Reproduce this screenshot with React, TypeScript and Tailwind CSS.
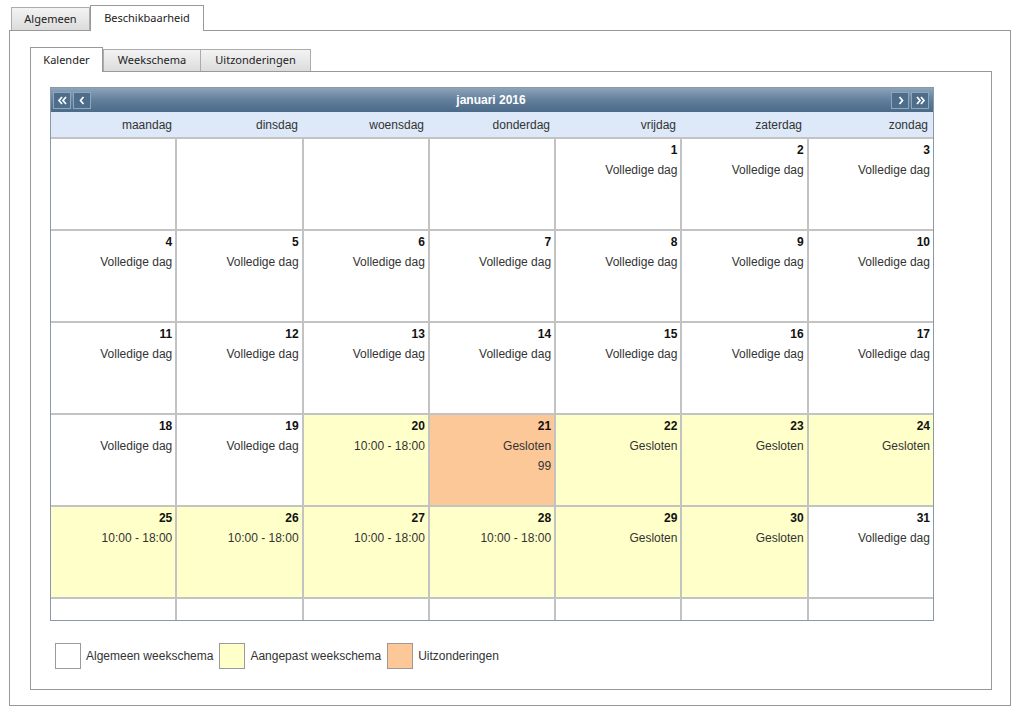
import React from 'react';

type Kind = 'none' | 'white' | 'yellow' | 'orange';

interface DayCell {
    day?: number;
    lines?: string[];
    kind: Kind;
}

const dayNames = ['maandag', 'dinsdag', 'woensdag', 'donderdag', 'vrijdag', 'zaterdag', 'zondag'];

const full = ['Volledige dag'];
const open = ['10:00 - 18:00'];
const closed = ['Gesloten'];

// januari 2016 starts on a friday
const weeks: DayCell[][] = [
    [
        { kind: 'none' }, { kind: 'none' }, { kind: 'none' }, { kind: 'none' },
        { day: 1, lines: full, kind: 'white' },
        { day: 2, lines: full, kind: 'white' },
        { day: 3, lines: full, kind: 'white' },
    ],
    [4, 5, 6, 7, 8, 9, 10].map(d => ({ day: d, lines: full, kind: 'white' as Kind })),
    [11, 12, 13, 14, 15, 16, 17].map(d => ({ day: d, lines: full, kind: 'white' as Kind })),
    [
        { day: 18, lines: full, kind: 'white' },
        { day: 19, lines: full, kind: 'white' },
        { day: 20, lines: open, kind: 'yellow' },
        { day: 21, lines: ['Gesloten', '99'], kind: 'orange' },
        { day: 22, lines: closed, kind: 'yellow' },
        { day: 23, lines: closed, kind: 'yellow' },
        { day: 24, lines: closed, kind: 'yellow' },
    ],
    [
        { day: 25, lines: open, kind: 'yellow' },
        { day: 26, lines: open, kind: 'yellow' },
        { day: 27, lines: open, kind: 'yellow' },
        { day: 28, lines: open, kind: 'yellow' },
        { day: 29, lines: closed, kind: 'yellow' },
        { day: 30, lines: closed, kind: 'yellow' },
        { day: 31, lines: full, kind: 'white' },
    ],
];

const bgFor = (kind: Kind) =>
    kind === 'yellow' ? 'bg-[#ffffc9]' : kind === 'orange' ? 'bg-[#fdc898]' : 'bg-white';

function NavButton({ children }: { children: React.ReactNode }) {
    return (
        <div className="w-[18px] h-[17px] border border-[#8fa7bd] bg-[#4d6d8b] flex items-center justify-center">
            {children}
        </div>
    );
}

function Chevron({ dir, double }: { dir: 'l' | 'r'; double?: boolean }) {
    const single = dir === 'l' ? 'M7.5 3 L4.5 6.5 L7.5 10' : 'M5.5 3 L8.5 6.5 L5.5 10';
    const dbl = dir === 'l'
        ? 'M6 3 L3 6.5 L6 10 M10 3 L7 6.5 L10 10'
        : 'M3 3 L6 6.5 L3 10 M7 3 L10 6.5 L7 10';
    return (
        <svg width="13" height="13" viewBox="0 0 13 13">
            <path d={double ? dbl : single} fill="none" stroke="white" strokeWidth="1.7" />
        </svg>
    );
}

function Calendar() {
    return (
        <div className="w-[884px] border border-[#8a99a7] bg-white font-['Liberation_Sans',Arial,sans-serif] text-[12px] text-[#222]">
            {/* month header */}
            <div className="h-[24px] bg-gradient-to-b from-[#8ea4b9] via-[#627f9c] to-[#4b6a88] flex items-center px-[2px]">
                <div className="flex gap-[2px]">
                    <NavButton><Chevron dir="l" double /></NavButton>
                    <NavButton><Chevron dir="l" /></NavButton>
                </div>
                <div className="flex-1 text-center text-white font-bold">januari 2016</div>
                <div className="flex gap-[2px] mr-[2px]">
                    <NavButton><Chevron dir="r" /></NavButton>
                    <NavButton><Chevron dir="r" double /></NavButton>
                </div>
            </div>

            {/* day names */}
            <div className="h-[27px] bg-[#dde9f8] grid grid-cols-7 border-b-2 border-[#c3c3c3]">
                {dayNames.map(n => (
                    <div key={n} className="flex items-center justify-end pr-[5px] text-[#333]">
                        {n}
                    </div>
                ))}
            </div>

            {/* weeks */}
            <div className="grid grid-cols-7 gap-[2px] bg-[#c3c3c3]">
                {weeks.flat().map((c, i) => (
                    <div key={i} className={`h-[90px] ${bgFor(c.kind)} text-right pr-[3px] pt-[1px] leading-[20px]`}>
                        {c.day && <div className="font-bold text-[#111]">{c.day}</div>}
                        {c.lines?.map((l, j) => (
                            <div key={j} className="text-[#333]">{l}</div>
                        ))}
                    </div>
                ))}
                {Array.from({ length: 7 }).map((_, i) => (
                    <div key={`e${i}`} className="h-[21px] bg-white" />
                ))}
            </div>
        </div>
    );
}

function Legend() {
    const items = [
        { label: 'Algemeen weekschema', bg: 'bg-white' },
        { label: 'Aangepast weekschema', bg: 'bg-[#ffffc9]' },
        { label: 'Uitzonderingen', bg: 'bg-[#fdc898]' },
    ];
    return (
        <div className="flex items-center gap-[6px] mt-[22px] ml-[5px] font-['Liberation_Sans',Arial,sans-serif] text-[12px] text-[#333]">
            {items.map(it => (
                <div key={it.label} className="flex items-center gap-[5px]">
                    <div className={`w-[26px] h-[26px] border border-[#9a9a9a] ${it.bg}`} />
                    <span>{it.label}</span>
                </div>
            ))}
        </div>
    );
}

export default function App() {
    const font = "font-['Noto_Sans','Open_Sans',sans-serif]";
    return (
        <div className={`w-[1020px] h-[717px] bg-white ${font} text-[11px] text-[#222]`}>
            {/* outer tabs */}
            <div className="flex items-end pl-[11px] h-[30px]">
                <div className="h-[23px] w-[79px] border border-[#acacac] border-b-0 bg-gradient-to-b from-[#f3f3f3] to-[#dcdcdc] flex items-center justify-center">
                    Algemeen
                </div>
                <div className="h-[26px] w-[114px] border border-[#999] border-b-0 bg-white flex items-center justify-center -mb-px relative z-10">
                    Beschikbaarheid
                </div>
            </div>

            {/* outer panel */}
            <div className="ml-[9px] w-[1002px] h-[676px] border border-[#999] pt-[16px] pl-[20px]">
                {/* inner tabs */}
                <div className="flex items-end h-[24px]">
                    <div className="h-[25px] w-[73px] border border-[#999] border-b-0 bg-white flex items-center justify-center -mb-px relative z-10">
                        Kalender
                    </div>
                    <div className="h-[22px] w-[98px] border border-[#acacac] border-b-0 bg-gradient-to-b from-[#f3f3f3] to-[#dcdcdc] flex items-center justify-center">
                        Weekschema
                    </div>
                    <div className="h-[22px] w-[110px] border border-[#acacac] border-b-0 border-l-0 bg-gradient-to-b from-[#f3f3f3] to-[#dcdcdc] flex items-center justify-center">
                        Uitzonderingen
                    </div>
                </div>

                {/* inner panel */}
                <div className="w-[962px] h-[619px] border border-[#999] pt-[15px] pl-[19px]">
                    <Calendar />
                    <Legend />
                </div>
            </div>
        </div>
    );
}
